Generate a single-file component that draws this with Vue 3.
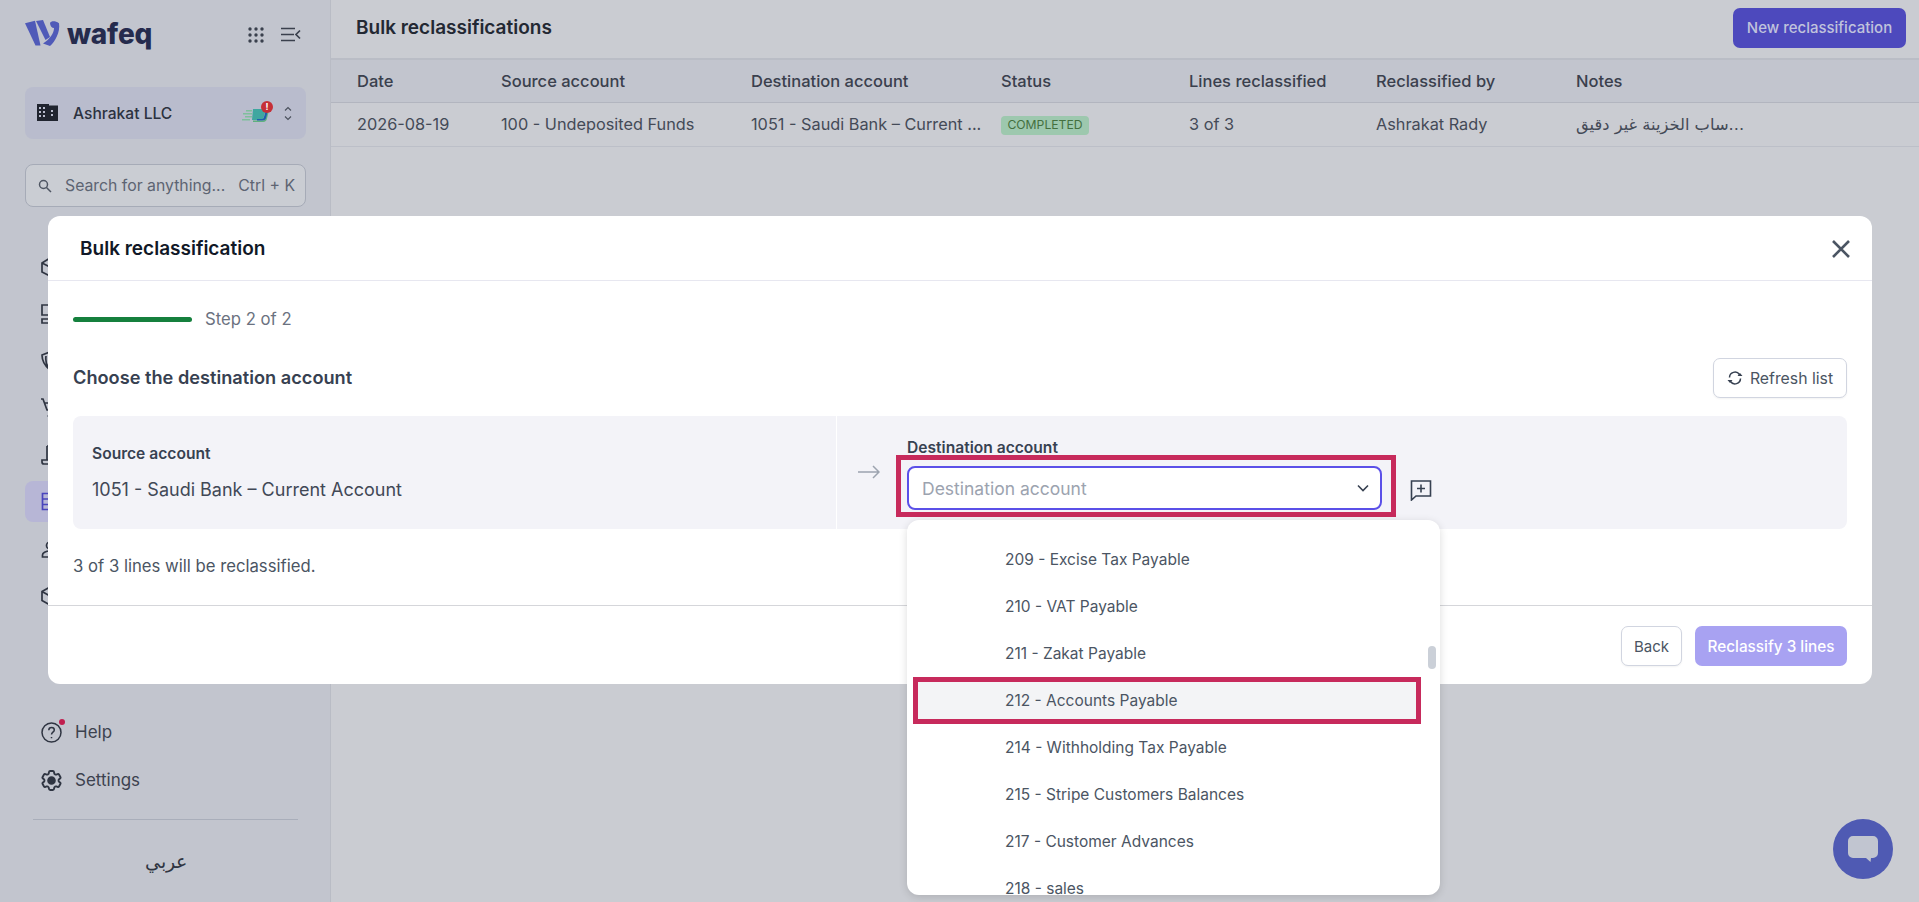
<script setup>
const navIcons = [
  'M1 6l8-5 8 5v9l-8 4-8-4z M1 6l8 4 8-4',
  'M1 1h7v10H1z M1 15h7v4H1z M12 1h7v4h-7z M12 9h7v10h-7z',
  'M1 4l8-3 8 3c0 6-2 11-8 15C4 15 1 10 1 4z M5 5c-.5 4 0 8 2 11',
  'M0 1h2l4 11h9l2-7H4 M6.500 18h1 M15 18h1',
  'M6 1h10v14 M6 1v14 M1 15h13v4H3a2 2 0 0 1-2-2z M9 5h4',
  'M1.500 1.500h16v16h-16z M1.500 7h16 M1.500 12.500h16 M8 1.500v16',
  'M9 3a3.500 3.500 0 1 1 0 7 3.500 3.500 0 0 1 0-7z M1.500 18v-2c0-2 3-4 7.500-4s7.500 2 7.500 4v2z',
  'M9 1l8 4.500v9L9 19l-8-4.500v-9z M1 5.500 9 10l8-4.500 M9 10v9',
];

const columns = [
  { key: 'date', label: 'Date', width: '144px' },
  { key: 'source', label: 'Source account', width: '250px' },
  { key: 'dest', label: 'Destination account', width: '250px' },
  { key: 'status', label: 'Status', width: '188px' },
  { key: 'lines', label: 'Lines reclassified', width: '187px' },
  { key: 'by', label: 'Reclassified by', width: '200px' },
  { key: 'notes', label: 'Notes', width: '200px' },
];

const accounts = [
  { id: 209, name: '209 - Excise Tax Payable' },
  { id: 210, name: '210 - VAT Payable' },
  { id: 211, name: '211 - Zakat Payable' },
  { id: 212, name: '212 - Accounts Payable', marked: true },
  { id: 214, name: '214 - Withholding Tax Payable' },
  { id: 215, name: '215 - Stripe Customers Balances' },
  { id: 217, name: '217 - Customer Advances' },
  { id: 218, name: '218 - sales' },
];
</script>

<template>
  <div class="page">
    <aside class="sidebar">
      <div class="brand">
        <svg class="logo" width="36" height="27" viewBox="0 0 36 27">
          <path fill="#4f5ab8" d="M0 3.300 10 .7 15.500 25.500 10.500 25.500z" />
          <path fill="#4f5ab8" d="M11 1 18 0 25 17 20.500 20z" />
          <path fill="#4f5ab8" d="M25 3C26 1 30 .3 34 3.300 35.500 12 30 22 25 26L18 23.500C25 19 29 13 29 8 27 8 25 6 25 3z" />
        </svg>
        <span class="wordmark">wafeq</span>
        <svg class="grid-icon" width="16" height="16" viewBox="0 0 16 16" fill="#3a404d">
          <circle v-for="n in 9" :key="n" :cx="2 + ((n - 1) % 3) * 6" :cy="2 + Math.floor((n - 1) / 3) * 6" r="1.700" />
        </svg>
        <svg class="collapse-icon" width="20" height="15" viewBox="0 0 20 15" fill="none" stroke="#3a404d" stroke-width="1.700">
          <path d="M0 1.500h14 M0 7.500h13 M0 13.500h14 M19 3.500l-4 4 4 4" />
        </svg>
      </div>

      <div class="company">
        <svg width="21" height="18" viewBox="0 0 21 18">
          <path fill="#20242f" d="M0 0h12v1.500h9V17H0z" />
          <path fill="#b9bccd" d="M2 3h2v2H2zm4 0h2v2H6zM2 7h2v2H2zm4 0h2v2H6zm-4 4h2v2H2zm4 0h2v2H6zm8-5h2v2h-2zm0 4h2v2h-2z" />
        </svg>
        <span class="company-name">Ashrakat LLC</span>
        <div class="emblem">
          <svg width="30" height="22" viewBox="0 0 30 22">
            <path fill="#7fbf9c" d="M4 8h6v1.500H4zM1 11h9v1.500H1zM3 14h7v1.500H3zM0 17h8v1.500H0z" />
            <path fill="#5fb07f" d="M11 20h10c2.500 0 3.500-1.500 4-3.500l1.500-6-3 1-2 7H11z" />
            <path fill="#3fa7a0" d="M11 7h13l-3 11H10z" />
            <path fill="#1e5fae" d="M24.500 6h2l-2.500 10c-.5 1.500-1.500 2.500-3.500 2.500H15v-1.500h5c1 0 1.500-.5 2-2z" />
          </svg>
          <span class="alert">!</span>
        </div>
        <svg width="10" height="15" viewBox="0 0 10 15" fill="none" stroke="#4a505c" stroke-width="1.100">
          <path d="M2 4.500 5 1.500l3 3 M2 10.500 5 13.500l3-3" />
        </svg>
      </div>

      <div class="search">
        <svg width="14" height="14" viewBox="0 0 14 14" fill="none" stroke="#4f5663" stroke-width="1.500">
          <circle cx="5.500" cy="5.500" r="4" />
          <path d="M8.500 8.500 13 13" />
        </svg>
        <span class="search-text">Search for anything...</span>
        <span class="search-key">Ctrl + K</span>
      </div>

      <nav class="nav">
        <div v-for="(d, i) in navIcons" :key="i" class="nav-item" :class="{ active: i === 5 }">
          <svg width="20" height="20" viewBox="0 0 20 20" fill="none" stroke="currentColor" stroke-width="1.700">
            <path :d="d" />
          </svg>
        </div>
      </nav>

      <div class="side-bottom">
        <div class="side-link">
          <span class="help-wrap">
            <svg width="21" height="21" viewBox="0 0 21 21" fill="none" stroke="#2f3542" stroke-width="1.500">
              <circle cx="10.500" cy="10.500" r="9.500" />
              <path d="M7.800 8.200c0-1.700 1.200-2.700 2.800-2.700s2.700 1 2.700 2.500c0 2.200-2.800 2.200-2.800 4.500 M10.500 15v1.200" />
            </svg>
            <i class="help-dot"></i>
          </span>
          <span>Help</span>
        </div>
        <div class="side-link">
          <svg width="21" height="21" viewBox="2 2 20 20" fill="none" stroke="#2f3542" stroke-width="1.800">
            <path d="M9.594 3.940c.09-.542.56-.94 1.110-.94h2.593c.55 0 1.020.398 1.110.94l.213 1.281c.063.374.313.686.645.870.074.040.147.083.22.127.324.196.72.257 1.075.124l1.217-.456a1.125 1.125 0 011.370.49l1.296 2.247a1.125 1.125 0 01-.26 1.431l-1.003.827c-.293.24-.438.613-.431.992a6.759 6.759 0 010 .255c-.007.378.138.75.43.99l1.005.828c.424.35.534.954.26 1.430l-1.298 2.247a1.125 1.125 0 01-1.369.491l-1.217-.456c-.355-.133-.75-.072-1.076.124a6.570 6.570 0 01-.22.128c-.331.183-.581.495-.644.869l-.213 1.280c-.09.543-.56.941-1.110.941h-2.594c-.55 0-1.020-.398-1.110-.94l-.213-1.281c-.062-.374-.312-.686-.644-.870a6.520 6.520 0 01-.22-.127c-.325-.196-.72-.257-1.076-.124l-1.217.456a1.125 1.125 0 01-1.369-.49l-1.297-2.247a1.125 1.125 0 01.26-1.431l1.004-.827c.292-.24.437-.613.43-.992a6.932 6.932 0 010-.255c.007-.378-.138-.75-.43-.99l-1.004-.828a1.125 1.125 0 01-.26-1.430l1.297-2.247a1.125 1.125 0 011.370-.491l1.216.456c.356.133.751.072 1.076-.124.072-.044.146-.087.22-.128.332-.183.582-.495.644-.869l.214-1.281z" />
            <circle cx="12" cy="12" r="3.200" fill="#2f3542" />
          </svg>
          <span>Settings</span>
        </div>
        <div class="side-rule"></div>
        <div class="lang">عربي</div>
      </div>
    </aside>

    <main class="main">
      <header class="topbar">
        <h1>Bulk reclassifications</h1>
        <button class="btn-new">New reclassification</button>
      </header>
      <div class="thead">
        <div v-for="c in columns" :key="c.key" class="cell" :style="{ width: c.width }">{{ c.label }}</div>
      </div>
      <div class="trow">
        <div class="cell" :style="{ width: columns[0].width }">2026-08-19</div>
        <div class="cell" :style="{ width: columns[1].width }">100 - Undeposited Funds</div>
        <div class="cell" :style="{ width: columns[2].width }">1051 - Saudi Bank – Current ...</div>
        <div class="cell" :style="{ width: columns[3].width }"><span class="badge">COMPLETED</span></div>
        <div class="cell" :style="{ width: columns[4].width }">3 of 3</div>
        <div class="cell" :style="{ width: columns[5].width }">Ashrakat Rady</div>
        <div class="cell notes" :style="{ width: columns[6].width }"><span dir="rtl">...ساب الخزينة غير دقيق</span></div>
      </div>
    </main>

    <div class="backdrop">
      <section class="modal">
        <header class="modal-head">
          <h2>Bulk reclassification</h2>
          <svg width="18" height="18" viewBox="0 0 18 18" fill="none" stroke="#4b5563" stroke-width="2.600">
            <path d="M1 1l16 16 M17 1 1 17" />
          </svg>
        </header>

        <div class="modal-body">
          <div class="steps">
            <span class="step-bar"></span>
            <span class="step-text">Step 2 of 2</span>
          </div>
          <div class="choose">
            <h3>Choose the destination account</h3>
            <button class="btn-outline refresh">
              <svg width="16" height="16" viewBox="0 0 16 16" fill="none" stroke="#374151" stroke-width="1.500">
                <path d="M2.500 7.500A5.500 5.500 0 0 1 12.500 4.500 M13.500 8.500A5.500 5.500 0 0 1 3.500 11.500" />
                <path fill="#374151" stroke="none" d="M10.500 6h5L13 3zM.5 10h5L3 13z" />
              </svg>
              Refresh list
            </button>
          </div>

          <div class="panel">
            <div class="panel-left">
              <div class="label">Source account</div>
              <div class="source-value">1051 - Saudi Bank – Current Account</div>
            </div>
            <div class="panel-right">
              <svg class="arrow" width="22" height="14" viewBox="0 0 22 14" fill="none" stroke="#9ca3af" stroke-width="1.500">
                <path d="M0 7h21 M15 1l6 6-6 6" />
              </svg>
              <div class="field">
                <div class="label">Destination account</div>
                <div class="select-row">
                  <div class="select">
                    <span class="placeholder">Destination account</span>
                    <svg width="12" height="8" viewBox="0 0 12 8" fill="none" stroke="#374151" stroke-width="1.600">
                      <path d="M1 1.500l5 5 5-5" />
                    </svg>
                    <i class="select-mark"></i>
                  </div>
                  <svg class="add-icon" width="22" height="22" viewBox="0 0 22 22" fill="none" stroke="#374151" stroke-width="1.600">
                    <path d="M1.500 2h19v15H6l-4.500 4z M11 5.500v8 M7 9.500h8" />
                  </svg>
                </div>
              </div>
            </div>
          </div>

          <p class="note">3 of 3 lines will be reclassified.</p>
        </div>

        <footer class="modal-foot">
          <button class="btn-outline back">Back</button>
          <button class="btn-primary">Reclassify 3 lines</button>
        </footer>

        <div class="dropdown">
          <div v-for="a in accounts" :key="a.id" class="option" :class="{ marked: a.marked }">{{ a.name }}</div>
          <i class="scroll-thumb"></i>
        </div>
      </section>
    </div>

    <div class="chat">
      <svg width="30" height="27" viewBox="0 0 30 27">
        <path fill="#c1c5d0" d="M5 0h20a5 5 0 0 1 5 5v12a5 5 0 0 1-5 5h-2l-.5 4-4.500-4H5a5 5 0 0 1-5-5V5a5 5 0 0 1 5-5z" />
      </svg>
    </div>
  </div>
</template>

<style>
html, body { margin: 0; padding: 0; }
</style>

<style scoped>
.page {
  position: relative;
  display: flex;
  width: 1919px;
  height: 902px;
  overflow: hidden;
  background: #caccd2;
  font-family: Inter, "Noto Sans", sans-serif;
  color: #3c424f;
}

h1, h2, h3, p { margin: 0; }
button { font-family: inherit; cursor: pointer; }

/* sidebar */
.sidebar {
  width: 331px;
  flex: none;
  box-sizing: border-box;
  border-right: 1px solid #b9bcc5;
  background: #c2c5ce;
  display: flex;
  flex-direction: column;
  padding: 0 24px 0 25px;
}
.brand {
  height: 87px;
  display: flex;
  align-items: flex-start;
  padding-top: 20px;
  box-sizing: border-box;
}
.wordmark {
  font-size: 28px;
  line-height: 28px;
  font-weight: 800;
  color: #252b4d;
  margin-left: 6px;
  width: 181px;
  letter-spacing: -.2px;
}
.grid-icon { margin-top: 7px; }
.collapse-icon { margin: 7px 0 0 17px; }

.company {
  height: 52px;
  display: flex;
  align-items: center;
  padding: 0 13px 0 12px;
  border-radius: 8px;
  background: #b9bccd;
  font-size: 15.600px;
  font-weight: 500;
  color: #2c3240;
}
.company-name { margin-left: 15px; flex: 1; }
.emblem { position: relative; width: 30px; height: 22px; margin-right: 11px; }
.alert {
  position: absolute;
  top: -1px;
  right: -1px;
  width: 12px;
  height: 12px;
  border-radius: 50%;
  background: #c62f37;
  color: #fff;
  font-size: 9px;
  line-height: 12px;
  font-weight: 700;
  text-align: center;
}

.search {
  height: 43px;
  margin-top: 25px;
  box-sizing: border-box;
  display: flex;
  align-items: center;
  padding: 0 10px 0 12px;
  border: 1px solid #a6abb7;
  border-radius: 8px;
  background: #cacdd3;
  font-size: 15.800px;
  color: #5d6472;
}
.search-text { margin-left: 13px; flex: 1; white-space: nowrap; }
.search-key { white-space: nowrap; }

.nav { margin-top: 36px; display: flex; flex-direction: column; }
.nav-item {
  height: 47px;
  display: flex;
  align-items: center;
  padding-left: 16px;
  color: #2f3542;
  border-radius: 8px;
}
.nav-item.active { background: #b7b6d6; color: #4a45bd; height: 41px; margin: 3px 0; }

.side-bottom { margin-top: auto; padding-bottom: 22px; }
.side-link {
  height: 48px;
  display: flex;
  align-items: center;
  gap: 13px;
  padding-left: 16px;
  font-size: 17px;
  color: #3c424f;
}
.help-wrap { position: relative; display: flex; }
.help-dot {
  position: absolute;
  top: -3px;
  right: -3px;
  width: 6px;
  height: 6px;
  border-radius: 50%;
  background: #c01f4f;
}
.side-rule { height: 1px; background: #a9aeba; margin: 15px 8px 0; }
.lang {
  margin-top: 24px;
  text-align: center;
  font-size: 19px;
  line-height: 36px;
  color: #2f3542;
}

/* page behind the dialog */
.main { flex: 1; min-width: 0; }
.topbar {
  height: 60px;
  box-sizing: border-box;
  display: flex;
  align-items: center;
  justify-content: space-between;
  padding: 0 13px 3px 25px;
  border-bottom: 2px solid #babdc6;
}
.topbar h1 { font-size: 19px; font-weight: 600; color: #232833; }
.btn-new {
  height: 40px;
  width: 173px;
  padding: 0;
  border: 0;
  border-radius: 7px;
  background: #4d49bd;
  color: #c0c3dc;
  font-size: 15px;
  font-weight: 500;
}
.thead, .trow { display: flex; align-items: center; padding-left: 26px; box-sizing: border-box; }
.thead {
  height: 43px;
  background: #c2c5ce;
  border-bottom: 1px solid #b2b5bf;
  font-size: 16.500px;
  font-weight: 500;
  color: #3a404d;
}
.trow {
  height: 44px;
  padding-bottom: 1px;
  border-bottom: 1px solid #bcbfc8;
  font-size: 16.300px;
  color: #444a57;
}
.cell { flex: none; box-sizing: border-box; white-space: nowrap; }
.badge {
  display: inline-block;
  height: 19px;
  width: 88px;
  box-sizing: border-box;
  border-radius: 4px;
  background: #9dc8ae;
  color: #44703f;
  font-size: 12.200px;
  line-height: 17px;
  text-align: center;
}
.notes { font-family: "DejaVu Sans", sans-serif; font-size: 16.300px; }

/* dialog */
.backdrop {
  position: absolute;
  inset: 0;
  padding: 216px 47px 0 48px;
  box-sizing: border-box;
}
.modal {
  position: relative;
  height: 468px;
  display: flex;
  flex-direction: column;
  background: #fff;
  border-radius: 12px;
}
.modal-head {
  height: 65px;
  box-sizing: border-box;
  display: flex;
  align-items: center;
  justify-content: space-between;
  padding: 1px 22px 0 32px;
  border-bottom: 1px solid #e7e7f0;
}
.modal-head h2 { font-size: 19px; font-weight: 600; color: #111827; }
.modal-body { flex: 1; padding: 0 25px; }
.steps { display: flex; align-items: center; gap: 13px; height: 24px; margin-top: 26px; }
.step-bar { width: 119px; height: 5px; border-radius: 3px; background: #15803d; }
.step-text { font-size: 16.700px; color: #6b7280; }
.choose {
  display: flex;
  align-items: center;
  justify-content: space-between;
  height: 40px;
  margin-top: 27px;
}
.choose h3 { font-size: 18.200px; font-weight: 600; color: #374151; margin-top: -2px; }
.btn-outline {
  height: 40px;
  box-sizing: border-box;
  border: 1px solid #d1d5e0;
  border-radius: 7px;
  background: #fff;
  color: #4b5563;
  font-size: 15px;
  box-shadow: 0 1px 2px rgba(0, 0, 0, .05);
}
.refresh { width: 134px; display: flex; align-items: center; justify-content: center; gap: 7px; padding: 0; font-size: 15.800px; }
.panel {
  display: flex;
  height: 113px;
  margin-top: 18px;
  border-radius: 8px;
  background: #f3f3f8;
}
.panel-left {
  width: 764px;
  box-sizing: border-box;
  padding: 29px 19px 0;
  border-right: 1px solid #fff;
}
.label { font-size: 15.600px; line-height: 18px; font-weight: 600; color: #374151; white-space: nowrap; }
.source-value { margin-top: 15px; font-size: 18px; line-height: 24px; color: #414856; }
.panel-right { display: flex; padding-left: 21px; }
.arrow { margin-top: 49px; }
.field { margin-left: 27px; padding-top: 23px; }
.select-row { display: flex; align-items: center; margin-top: 9px; }
.select {
  position: relative;
  width: 475px;
  height: 44px;
  box-sizing: border-box;
  display: flex;
  align-items: center;
  justify-content: space-between;
  padding: 0 11px 0 13px;
  border: 2px solid #5b50e8;
  border-radius: 8px;
  background: #fff;
}
.placeholder { font-size: 17.500px; color: #9ca3af; }
.select-mark {
  position: absolute;
  left: -13px;
  right: -16px;
  top: -13px;
  bottom: -9px;
  border: 5px solid #c72a5c;
  pointer-events: none;
}
.add-icon { margin: 3px 0 0 28px; }
.note { margin-top: 25px; font-size: 16.700px; line-height: 24px; color: #4b5563; }
.modal-foot {
  height: 79px;
  box-sizing: border-box;
  display: flex;
  justify-content: flex-end;
  gap: 13px;
  padding: 20px 25px 0;
  border-top: 1px solid #d5d6da;
}
.back { width: 61px; padding: 0; }
.btn-primary {
  width: 152px;
  height: 40px;
  padding: 0;
  border: 0;
  border-radius: 7px;
  background: #a8a2f2;
  color: #fff;
  font-size: 15.300px;
  font-weight: 500;
}
.dropdown {
  position: absolute;
  left: 859px;
  top: 304px;
  width: 533px;
  height: 375px;
  box-sizing: border-box;
  padding-top: 16px;
  overflow: hidden;
  background: #fff;
  border-radius: 12px;
  box-shadow: 0 2px 8px rgba(0, 0, 0, .14);
}
.option {
  height: 47px;
  box-sizing: border-box;
  margin: 0 19px 0 6px;
  padding-left: 92px;
  display: flex;
  align-items: center;
  font-size: 15.500px;
  color: #4b5563;
}
.option.marked { background: #f3f4f6; box-shadow: inset 0 0 0 5px #c72a5c; }
.scroll-thumb {
  position: absolute;
  right: 4px;
  top: 126px;
  width: 8px;
  height: 23px;
  border-radius: 4px;
  background: #cbd0d8;
}

.chat {
  position: absolute;
  left: 1833px;
  top: 819px;
  width: 60px;
  height: 60px;
  border-radius: 50%;
  background: #4f5ab3;
  display: flex;
  align-items: center;
  justify-content: center;
}
</style>
